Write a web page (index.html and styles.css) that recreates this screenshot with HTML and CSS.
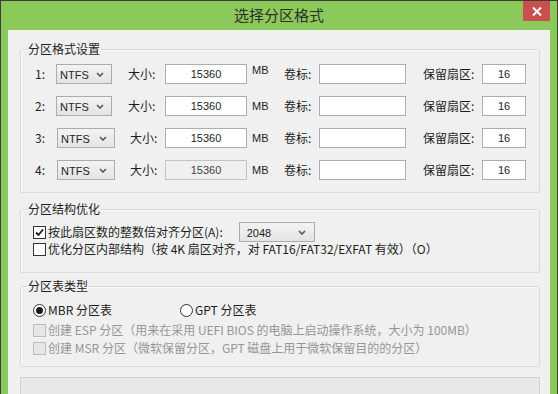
FILE: index.html
```html
<!DOCTYPE html>
<html lang="zh-CN">
<head>
<meta charset="utf-8">
<title>选择分区格式</title>
<link rel="stylesheet" href="styles.css">
</head>
<body>
<div class="window">
  <div class="titlebar">
    <span></span>
    <span class="title">选择分区格式</span>
    <span class="close"><svg width="10" height="9" viewBox="0 0 10 9"><path d="M1 0.5 L9 8.5 M9 0.5 L1 8.5" stroke="#fff" stroke-width="2" fill="none"/></svg></span>
  </div>
  <div class="content">
    <div class="group g1">
      <span class="legend">分区格式设置</span>
      <div class="prow">
        <span class="num">1:</span>
        <span class="combo"><span class="ctext">NTFS</span><svg class="chev" width="8" height="5" viewBox="0 0 8 5"><path d="M1 1 L4 4 L7 1" stroke="#555" stroke-width="1.6" fill="none"/></svg></span>
        <span class="lbl-size">大小:</span>
        <span class="input in-size">15360</span>
        <span class="lbl-mb mb-top">MB</span>
        <span class="lbl-vol">卷标:</span>
        <span class="input in-vol"></span>
        <span class="lbl-res">保留扇区:</span>
        <span class="input in-res">16</span>
      </div>
      <div class="prow">
        <span class="num">2:</span>
        <span class="combo"><span class="ctext">NTFS</span><svg class="chev" width="8" height="5" viewBox="0 0 8 5"><path d="M1 1 L4 4 L7 1" stroke="#555" stroke-width="1.6" fill="none"/></svg></span>
        <span class="lbl-size">大小:</span>
        <span class="input in-size">15360</span>
        <span class="lbl-mb">MB</span>
        <span class="lbl-vol">卷标:</span>
        <span class="input in-vol"></span>
        <span class="lbl-res">保留扇区:</span>
        <span class="input in-res">16</span>
      </div>
      <div class="prow">
        <span class="num">3:</span>
        <span class="combo combo-wide"><span class="ctext">NTFS</span><svg class="chev" width="8" height="5" viewBox="0 0 8 5"><path d="M1 1 L4 4 L7 1" stroke="#555" stroke-width="1.6" fill="none"/></svg></span>
        <span class="lbl-size lbl-size-narrow">大小:</span>
        <span class="input in-size">15360</span>
        <span class="lbl-mb">MB</span>
        <span class="lbl-vol">卷标:</span>
        <span class="input in-vol"></span>
        <span class="lbl-res">保留扇区:</span>
        <span class="input in-res">16</span>
      </div>
      <div class="prow">
        <span class="num">4:</span>
        <span class="combo combo-wide"><span class="ctext">NTFS</span><svg class="chev" width="8" height="5" viewBox="0 0 8 5"><path d="M1 1 L4 4 L7 1" stroke="#555" stroke-width="1.6" fill="none"/></svg></span>
        <span class="lbl-size lbl-size-narrow">大小:</span>
        <span class="input in-size disabled">15360</span>
        <span class="lbl-mb">MB</span>
        <span class="lbl-vol">卷标:</span>
        <span class="input in-vol"></span>
        <span class="lbl-res">保留扇区:</span>
        <span class="input in-res">16</span>
      </div>
    </div>

    <div class="group g2">
      <span class="legend">分区结构优化</span>
      <div class="crow crow-first">
        <span class="check checked"><svg width="11" height="11" viewBox="0 0 11 11"><path d="M2 5.5 L4.5 8 L9 2.5" stroke="#1a1a1a" stroke-width="1.8" fill="none"/></svg></span>
        <span class="ctxt">按此扇区数的整数倍对齐分区(A):</span>
        <span class="combo combo-align"><span class="ctext">2048</span><svg class="chev" width="8" height="5" viewBox="0 0 8 5"><path d="M1 1 L4 4 L7 1" stroke="#555" stroke-width="1.6" fill="none"/></svg></span>
      </div>
      <div class="crow crow-second">
        <span class="check"></span>
        <span class="ctxt">优化分区内部结构（按 4K 扇区对齐，对 FAT16/FAT32/EXFAT 有效）（O）</span>
      </div>
    </div>

    <div class="group g3">
      <span class="legend">分区表类型</span>
      <div class="rrow">
        <span class="radio-item"><span class="radio on"></span><span class="ctxt">MBR 分区表</span></span>
        <span class="radio-item"><span class="radio"></span><span class="ctxt">GPT 分区表</span></span>
      </div>
      <div class="drow">
        <span class="check dis"></span>
        <span class="ctxt">创建 ESP 分区（用来在采用 UEFI BIOS 的电脑上启动操作系统，大小为 100MB）</span>
      </div>
      <div class="drow">
        <span class="check dis"></span>
        <span class="ctxt">创建 MSR 分区（微软保留分区，GPT 磁盘上用于微软保留目的的分区）</span>
      </div>
    </div>

    <div class="panel"></div>
  </div>
</div>
</body>
</html>
```
FILE: styles.css
```css
html, body {
  margin: 0;
  padding: 0;
}
body {
  width: 558px;
  height: 394px;
  overflow: hidden;
  font-family: "Noto Sans CJK SC", "Liberation Sans", sans-serif;
  font-size: 12px;
  color: #1e1e1e;
}
.window {
  box-sizing: border-box;
  width: 558px;
  height: 394px;
  border: 1px solid #3c3c3c;
  border-bottom: none;
  background: #8cc95b;
  display: flex;
  flex-direction: column;
  overflow: hidden;
}
.titlebar {
  height: 29px;
  flex: none;
  display: grid;
  grid-template-columns: 1fr auto 1fr;
  align-items: start;
}
.title {
  font-size: 15px;
  line-height: 28px;
  color: #2e2e2e;
}
.close {
  justify-self: end;
  margin-right: 7px;
  width: 27px;
  height: 20px;
  background: #c9504f;
  display: flex;
  align-items: center;
  justify-content: center;
}
.content {
  flex: 1;
  min-height: 0;
  overflow: hidden;
  margin: 0 7px;
  background: #f0f0f0;
  padding: 19px 10px 0 12px;
  display: flex;
  flex-direction: column;
}
.group {
  position: relative;
  flex: none;
  border: 1px solid #d9d9d9;
  border-radius: 2px;
  box-shadow: inset 1px 1px 0 #fbfbfb;
}
.legend {
  position: absolute;
  top: -10px;
  left: 6px;
  padding: 0 1px;
  background: #f0f0f0;
  line-height: 17px;
  font-size: 12px;
  color: #1e1e1e;
}
.g1 {
  padding: 14px 0 12px 14px;
  display: flex;
  flex-direction: column;
  gap: 12px;
}
.prow {
  display: flex;
  align-items: center;
  height: 20px;
  line-height: 20px;
}
.num {
  width: 21px;
}
.combo {
  box-sizing: border-box;
  width: 56px;
  height: 20px;
  border: 1px solid #acacac;
  background: linear-gradient(#f3f3f3, #e4e4e4);
  display: flex;
  align-items: center;
  justify-content: space-between;
  padding: 0 7px 0 3px;
}
.combo-wide {
  width: 58px;
  margin-left: 1px;
}
.ctext {
  font-family: "Liberation Sans", sans-serif;
  font-size: 11px;
  line-height: 18px;
  padding-top: 1px;
}
.chev {
  display: block;
}
.lbl-size {
  margin-left: 16px;
  width: 37px;
}
.lbl-size-narrow {
  margin-left: 15px;
  width: 35px;
}
.input {
  box-sizing: border-box;
  height: 20px;
  border: 1px solid #abadb3;
  background: #fff;
  font-family: "Liberation Sans", sans-serif;
  font-size: 11px;
  line-height: 18px;
  text-align: center;
}
.input.disabled {
  background: #f0f0f0;
  border-color: #c4c4c4;
  color: #444;
}
.in-size {
  width: 82px;
}
.lbl-mb {
  margin-left: 5px;
  width: 32px;
  font-family: "Liberation Sans", sans-serif;
  font-size: 11px;
  line-height: 18px;
}
.mb-top {
  align-self: flex-start;
  line-height: 12px;
}
.lbl-vol {
  width: 35px;
}
.in-vol {
  width: 87px;
}
.lbl-res {
  margin-left: 17px;
  width: 59px;
}
.in-res {
  width: 44px;
}

.g2 {
  margin-top: 16px;
  padding: 12px 0 16px 12px;
}
.crow {
  display: flex;
  align-items: center;
}
.crow-first {
  height: 20px;
}
.crow-second {
  height: 14px;
}
.check {
  box-sizing: border-box;
  width: 13px;
  height: 13px;
  border: 1px solid #333;
  background: #fff;
  display: flex;
  align-items: center;
  justify-content: center;
  flex: none;
}
.check.dis {
  border-color: #bcbcbc;
  background: #e6e6e6;
}
.ctxt {
  margin-left: 2px;
  line-height: 14px;
  white-space: nowrap;
}
.combo-align {
  width: 76px;
  margin-left: 16px;
  padding-left: 7px;
  padding-right: 8px;
}

.g3 {
  margin-top: 13px;
  padding: 12px 0 9px 12px;
}
.rrow {
  display: flex;
  align-items: center;
  height: 22px;
}
.radio-item {
  display: flex;
  align-items: center;
}
.radio-item:first-child {
  width: 147px;
}
.radio {
  box-sizing: border-box;
  width: 13px;
  height: 13px;
  border: 1px solid #333;
  border-radius: 50%;
  background: #fff;
  display: flex;
  align-items: center;
  justify-content: center;
  flex: none;
}
.radio.on::after {
  content: "";
  width: 7px;
  height: 7px;
  border-radius: 50%;
  background: #1a1a1a;
}
.drow {
  display: flex;
  align-items: center;
  height: 18px;
  color: #969696;
}

.panel {
  flex: none;
  margin-top: 10px;
  height: 40px;
  border: 1px solid #d0d0d0;
  background: #e8e8e8;
}
```
